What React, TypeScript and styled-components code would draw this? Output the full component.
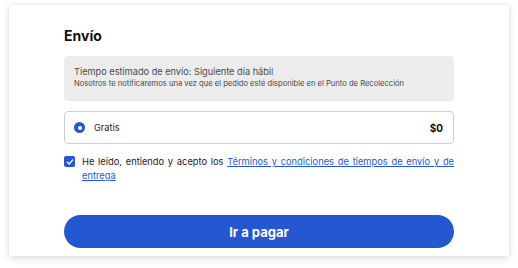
import React from 'react'
import styled, { createGlobalStyle } from 'styled-components'

const GlobalStyle = createGlobalStyle`
  html, body {
    margin: 0;
    padding: 0;
    background: #ffffff;
  }
  body {
    font-family: 'Inter', 'Liberation Sans', sans-serif;
    color: #1c1c1c;
  }
`

const Page = styled.div`
  width: 518px;
  height: 268px;
  padding: 5px 9px 0 9px;
  box-sizing: border-box;
`

const Card = styled.div`
  width: 500px;
  height: 251px;
  background: #ffffff;
  box-shadow: 0 2px 8px rgba(0, 0, 0, 0.14), 0 0 2px rgba(0, 0, 0, 0.06);
  box-sizing: border-box;
  padding: 21px 55px 0 55px;
  display: flex;
  flex-direction: column;
`

const Title = styled.h2`
  margin: 0;
  font-size: 14px;
  line-height: 20px;
  font-weight: 700;
  color: #111;
`

const InfoBox = styled.div`
  margin-top: 10px;
  height: 45px;
  box-sizing: border-box;
  background: #ececec;
  border-radius: 4px;
  padding: 9px 10px 0 10px;
`

const InfoMain = styled.div`
  font-size: 9.2px;
  line-height: 13px;
  color: #4a4a4a;
`

const InfoSub = styled.div`
  font-size: 7.6px;
  line-height: 12px;
  color: #4a4a4a;
`

const OptionBox = styled.label`
  margin-top: 10px;
  height: 33px;
  box-sizing: border-box;
  border: 1px solid #cfcfcf;
  border-radius: 4px;
  display: flex;
  align-items: center;
  padding: 0 10px 0 9px;
`

const Radio = styled.span`
  width: 11px;
  height: 11px;
  border-radius: 50%;
  background: #2358d1;
  display: flex;
  align-items: center;
  justify-content: center;
  &::after {
    content: '';
    width: 4px;
    height: 4px;
    border-radius: 50%;
    background: #fff;
  }
`

const OptionLabel = styled.span`
  margin-left: 9px;
  font-size: 9.2px;
  color: #1c1c1c;
  flex: 1;
`

const Price = styled.span`
  font-size: 10px;
  font-weight: 700;
  color: #111;
`

const TermsRow = styled.div`
  margin-top: 11px;
  display: flex;
  align-items: flex-start;
  gap: 7px;
`

const CheckBox = styled.span`
  flex: none;
  width: 11px;
  height: 11px;
  margin-top: 1px;
  border-radius: 2px;
  background: #2358d1;
  display: flex;
  align-items: center;
  justify-content: center;
`

const TermsText = styled.p`
  margin: 0;
  flex: 1;
  font-size: 9.3px;
  line-height: 14px;
  text-align: justify;
  color: #1c1c1c;
`

const TermsLink = styled.a`
  color: #1f5bd6;
  text-decoration: underline;
`

const PayButton = styled.button`
  margin-top: 32px;
  height: 33px;
  width: 100%;
  border: none;
  border-radius: 17px;
  background: #2358d1;
  color: #ffffff;
  font-family: 'Inter', 'Liberation Sans', sans-serif;
  font-size: 13px;
  font-weight: 700;
`

export default function App() {
  return (
    <>
      <GlobalStyle />
      <Page>
        <Card>
          <Title>Envío</Title>
          <InfoBox>
            <InfoMain>Tiempo estimado de envío: Siguiente día hábil</InfoMain>
            <InfoSub>Nosotros te notificaremos una vez que el pedido esté disponible en el Punto de Recolección</InfoSub>
          </InfoBox>
          <OptionBox>
            <Radio />
            <OptionLabel>Gratis</OptionLabel>
            <Price>$0</Price>
          </OptionBox>
          <TermsRow>
            <CheckBox>
              <svg width="8" height="8" viewBox="0 0 8 8">
                <path d="M1.3 4.2 L3.2 6 L6.7 2" fill="none" stroke="#fff" strokeWidth="1.4" strokeLinecap="round" strokeLinejoin="round" />
              </svg>
            </CheckBox>
            <TermsText>
              He leído, entiendo y acepto los{' '}
              <TermsLink href="#">Términos y condiciones de tiempos de envío y de entrega</TermsLink>
            </TermsText>
          </TermsRow>
          <PayButton>Ir a pagar</PayButton>
        </Card>
      </Page>
    </>
  )
}
